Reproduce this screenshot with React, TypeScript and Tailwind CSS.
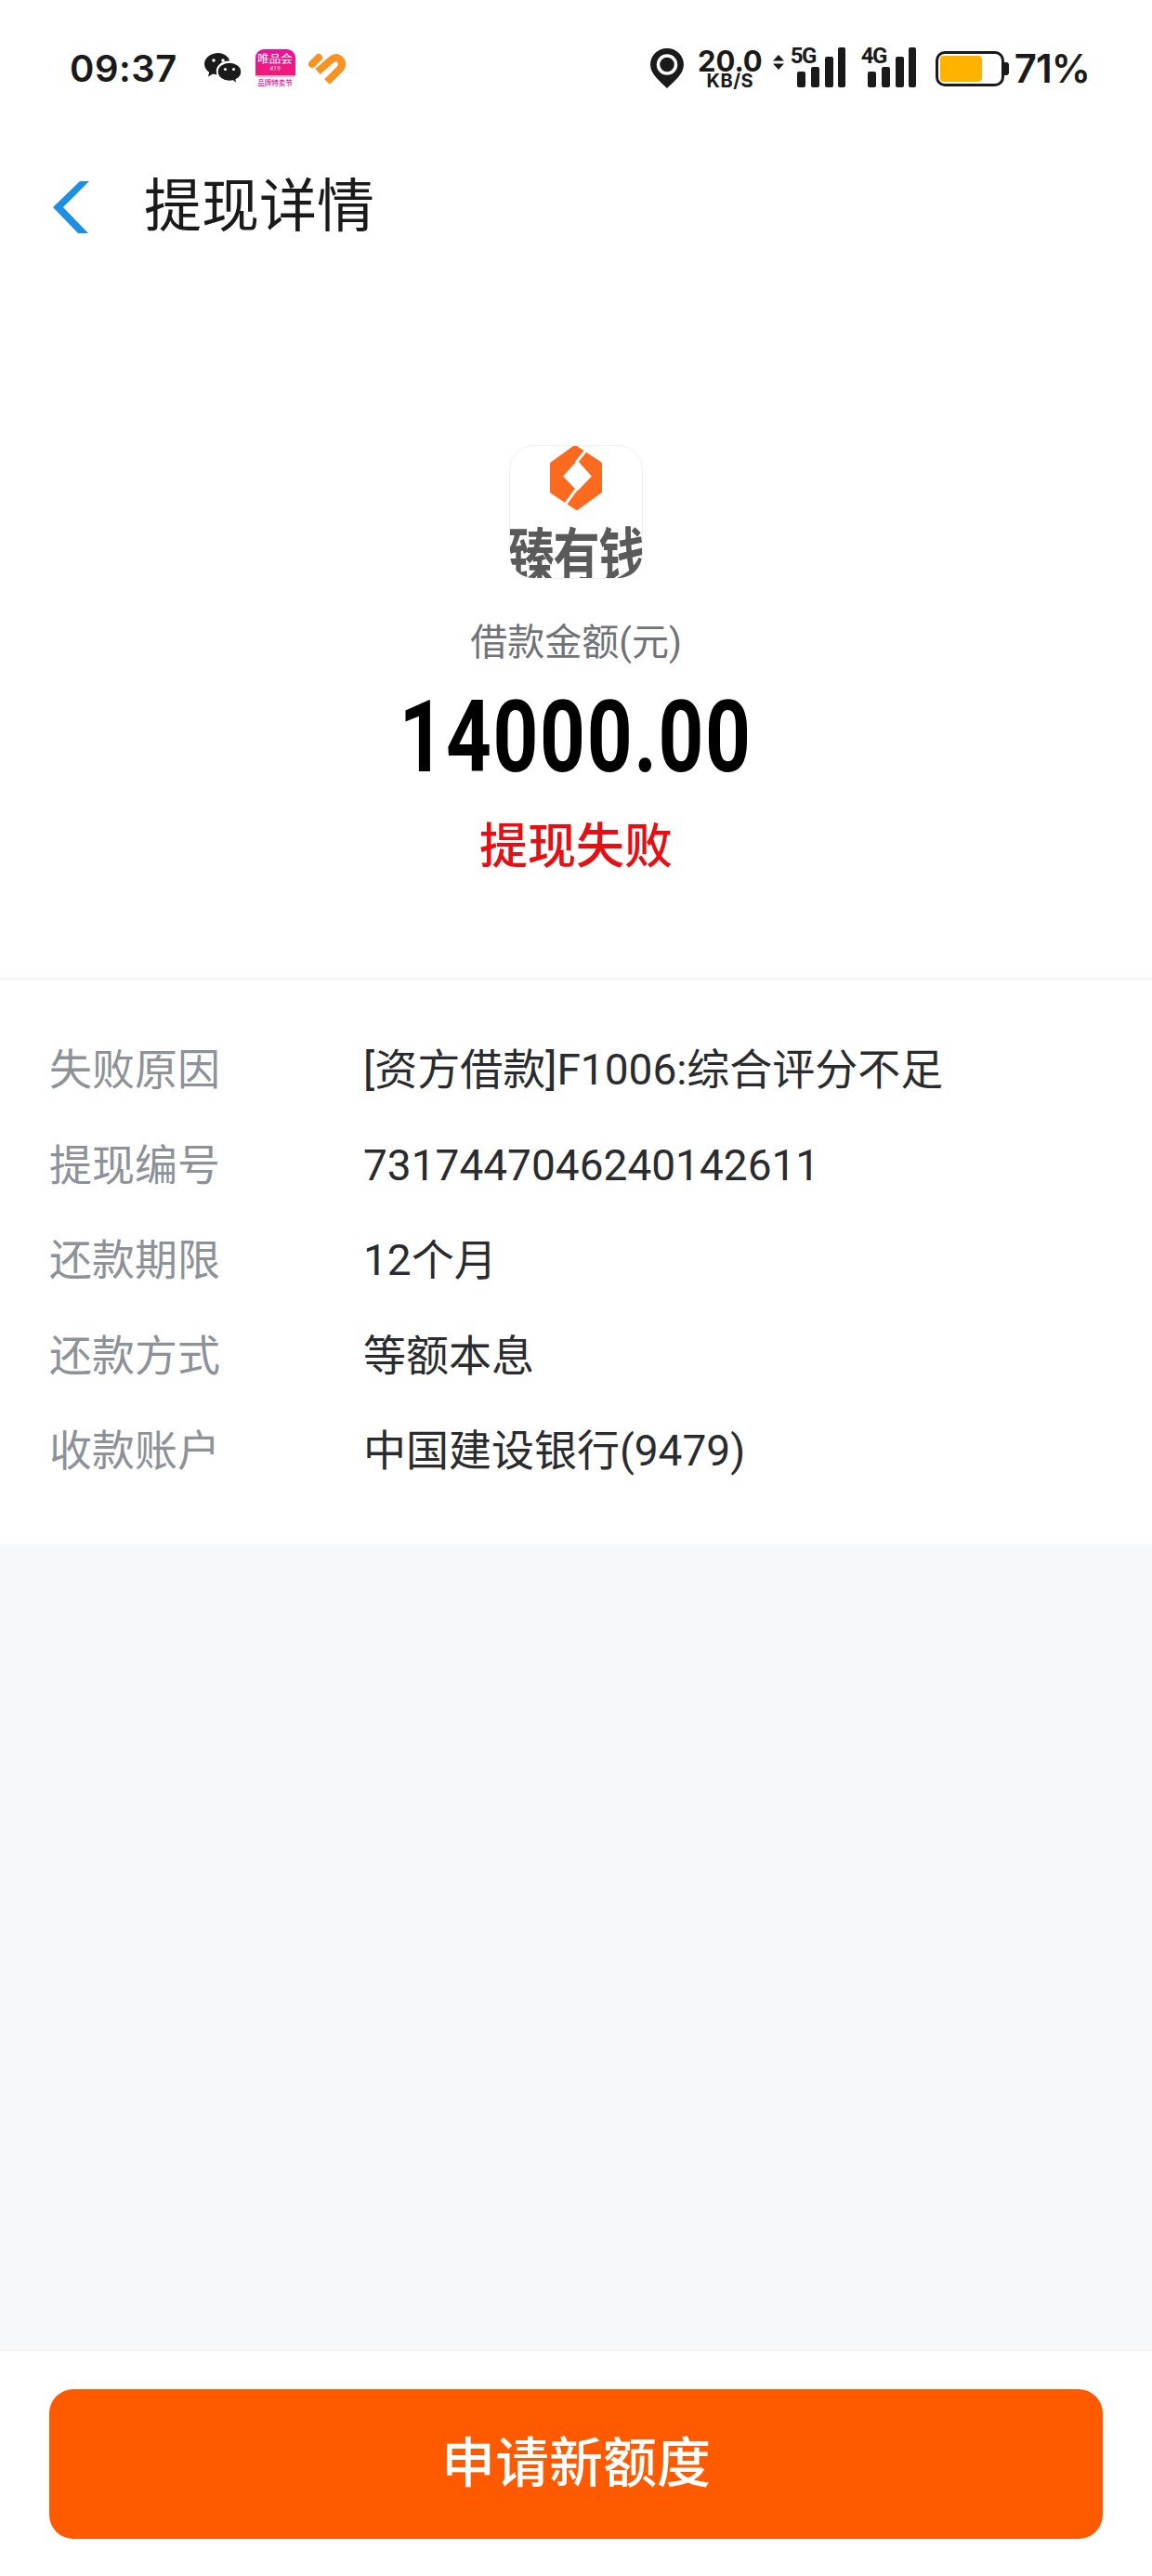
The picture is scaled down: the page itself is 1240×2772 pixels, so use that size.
const cjk = "font-['Roboto','Noto_Sans_CJK_SC',sans-serif]";

const rows = [
  { label: "失败原因", value: "[资方借款]F1006:综合评分不足" },
  { label: "提现编号", value: "7317447046240142611" },
  { label: "还款期限", value: "12个月" },
  { label: "还款方式", value: "等额本息" },
  { label: "收款账户", value: "中国建设银行(9479)" },
];

function WeChatIcon() {
  return (
    <svg width="40" height="34" viewBox="0 0 40 34" fill="#1a1a1a">
      <path d="M15 0C6.8 0 0 5.2 0 11.8c0 3.7 2 6.9 5.2 9l-1.2 4.6 5.2-2.9c1.4.4 2.8.6 4.3.7-.5-1.4-.7-2.6-.7-3.6 0-6.2 6-11 13.4-11h1C25.8 3.5 20.9 0 15 0z" />
      <path d="M27 10c-7 0-13 4.400-13 10.200 0 5.800 6 10.300 13 10.300 1.300 0 2.600-.2 3.800-.5l4.400 3.500-1-4.800c3.500-1.900 5.800-5 5.800-8.500C40 14.400 34 10 27 10z" stroke="#fff" strokeWidth="1.500" />
      <circle cx="10" cy="8" r="1.800" fill="#fff" />
      <circle cx="20" cy="8" r="1.800" fill="#fff" />
      <circle cx="22.500" cy="17.500" r="1.600" fill="#fff" />
      <circle cx="31.500" cy="17.500" r="1.600" fill="#fff" />
    </svg>
  );
}

function VipIcon() {
  return (
    <div className="flex h-[42px] w-[44px] flex-col items-center overflow-hidden">
      <div className="flex h-[30px] w-[43px] flex-col items-center overflow-hidden rounded-t-[9px] rounded-b-[2px] border-b-[2px] border-[#f7b2d0] bg-gradient-to-b from-[#ee0f9a] to-[#f01a78] pt-[3px]">
        <span className="font-['Noto_Sans_CJK_SC',sans-serif] text-[12.500px] leading-[14px] text-white">唯品会</span>
        <span className="font-['Roboto',sans-serif] text-[7px] italic leading-[8px] text-[#ffe3f1]">419</span>
      </div>
      <span className="mt-[1px] whitespace-nowrap font-['Noto_Sans_CJK_SC',sans-serif] text-[7.500px] font-medium leading-[10px] text-[#e2149f]">品牌特卖节</span>
    </div>
  );
}

function HeartIcon() {
  return (
    <svg width="40" height="34" viewBox="0 0 40 34" fill="none" stroke="#f79223" strokeWidth="8">
      <path d="M4 12 L11 5" strokeLinecap="round" />
      <path d="M10 20 L25 7 Q30 3 34.500 7.500 Q38 12 34 17 L20 31" />
    </svg>
  );
}

function Signal({ label }: { label: string }) {
  return (
    <div className="relative h-[43px] w-[59px]">
      <svg className="absolute left-0 top-0" width="59" height="43" viewBox="0 0 59 43" fill="#1a1a1a">
        <rect x="7" y="26" width="9" height="17" rx="2" />
        <rect x="22" y="21" width="9" height="22" rx="2" />
        <rect x="37" y="10" width="9" height="33" rx="2" />
        <rect x="51" y="0" width="8" height="43" rx="2" />
      </svg>
      <span className="absolute left-0 top-[-3px] font-['Roboto',sans-serif] text-[24px] font-bold leading-[24px] tracking-[-1.500px] text-[#1a1a1a]">
        {label}
      </span>
    </div>
  );
}

function StatusBar() {
  return (
    <div className="flex h-[146px] items-center justify-between pl-[75px] pr-[67px] pt-[1px] text-[#1a1a1a]">
      <div className="flex items-center">
        <span className="w-[145px] font-['Inter',sans-serif] text-[40px] font-semibold leading-none tracking-[0.5px]">09:37</span>
        <WeChatIcon />
        <div className="ml-[14px]"><VipIcon /></div>
        <div className="ml-[14px]"><HeartIcon /></div>
      </div>
      <div className="flex items-center">
        <svg width="36" height="43" viewBox="0 0 36 43">
          <path d="M18 0C8 0 0 7.800 0 17.500 0 28 11 36 18 43c7-7 18-15 18-25.500C36 7.800 28 0 18 0z" fill="#1a1a1a" />
          <circle cx="18" cy="17.500" r="9.500" fill="none" stroke="#fff" strokeWidth="3.500" />
        </svg>
        <div className="ml-[15px] flex w-[70px] flex-col items-center font-['Inter',sans-serif] font-bold">
          <span className="text-[31px] leading-[28px]">20.0</span>
          <span className="text-[20px] leading-[15px] tracking-[0.5px]">KB/S</span>
        </div>
        <svg className="ml-[11px] mb-[13px]" width="12" height="16" viewBox="0 0 12 16" fill="#1a1a1a">
          <path d="M6 0l6 6.500H0zM6 16l6-6.500H0z" />
        </svg>
        <div className="ml-[7px] mt-[-2px]"><Signal label="5G" /></div>
        <div className="ml-[17px] mt-[-2px]"><Signal label="4G" /></div>
        <div className="ml-[21px] flex items-center">
          <div className="h-[38px] w-[74px] rounded-[10px] border-[3px] border-[#1a1a1a] p-[2px]">
            <div className="h-full w-[45px] rounded-[4px] bg-[#ffb300]" />
          </div>
          <div className="h-[14px] w-[5px] rounded-r-[3px] bg-[#1a1a1a]" />
        </div>
        <span className="ml-[6px] font-['Inter',sans-serif] text-[42px] font-semibold leading-none tracking-[-1px]">71%</span>
      </div>
    </div>
  );
}

function AppLogo() {
  return (
    <div className="relative h-[144px] w-[144px] overflow-hidden rounded-[26px] border border-[#f0f0f0] bg-white">
      <svg className="mx-auto -mt-[5px] block" width="75" height="80" viewBox="0 0 75 80">
        <path d="M36 6 L63 24 L63 54 L38 72 L11 54 L11 24 Z" fill="#fb6a1e" stroke="#fb6a1e" strokeWidth="4" strokeLinejoin="round" />
        <path d="M38.500 22 L52.500 37.500 L38.500 52 L24.500 37.500 Z" fill="#fff" stroke="#fff" strokeWidth="2" strokeLinejoin="round" />
        <path d="M49 8 L37 23 M37 52 L26 67" stroke="#fff" strokeWidth="3" fill="none" />
      </svg>
      <div className="absolute left-1/2 top-[83px] -translate-x-1/2 scale-y-[1.3] whitespace-nowrap font-['Noto_Sans_CJK_SC',sans-serif] text-[50px] font-bold leading-[60px] tracking-[-1px] text-[#5a5a5a]">
        臻有钱
      </div>
    </div>
  );
}

export default function App() {
  return (
    <div className={`flex h-[2772px] w-[1240px] flex-col bg-white ${cjk}`}>
      <StatusBar />

      <div className="flex h-[152px] items-center pt-[2px]">
        <svg className="ml-[57px]" width="39" height="56" viewBox="0 0 39 56" fill="#1f8fe3">
          <path d="M29 0h10L11 28l27 28H27L0 28z" />
        </svg>
        <h1 className="ml-[59px] text-[62px] font-normal leading-none text-[#1a1a1a]">提现详情</h1>
      </div>

      <section className="flex flex-col items-center pt-[181px] pb-[105px]">
        <AppLogo />
        <div className="mt-[39px] text-[40px] leading-[60px] text-[#6f7277]">借款金额(元)</div>
        <div className="mt-[11px] scale-x-[0.79] font-['Roboto',sans-serif] text-[108px] font-bold leading-[120px] tracking-[2px] text-black">
          14000.00
        </div>
        <div className="mt-[24px] text-[52px] font-medium leading-[70px] text-[#e60f14]">提现失败</div>
      </section>

      <section className="border-t-[3px] border-[#f4f5f6] pt-[45px] pb-[49px]">
        {rows.map((row) => (
          <div key={row.label} className="flex h-[102.500px] items-center pl-[53px] text-[46px] leading-none">
            <span className="w-[338px] text-[#8d9299]">{row.label}</span>
            <span className="text-[#2a2b2e]">{row.value}</span>
          </div>
        ))}
      </section>

      <div className="flex-1 bg-[#f7f8fa]" />

      <footer className="h-[243px] border-t border-[#eeeeee] px-[53px] pt-[41px]">
        <button className="flex h-[161px] w-full items-center justify-center rounded-[26px] bg-[#ff5a00] text-[58px] font-medium text-white">
          申请新额度
        </button>
      </footer>
    </div>
  );
}
